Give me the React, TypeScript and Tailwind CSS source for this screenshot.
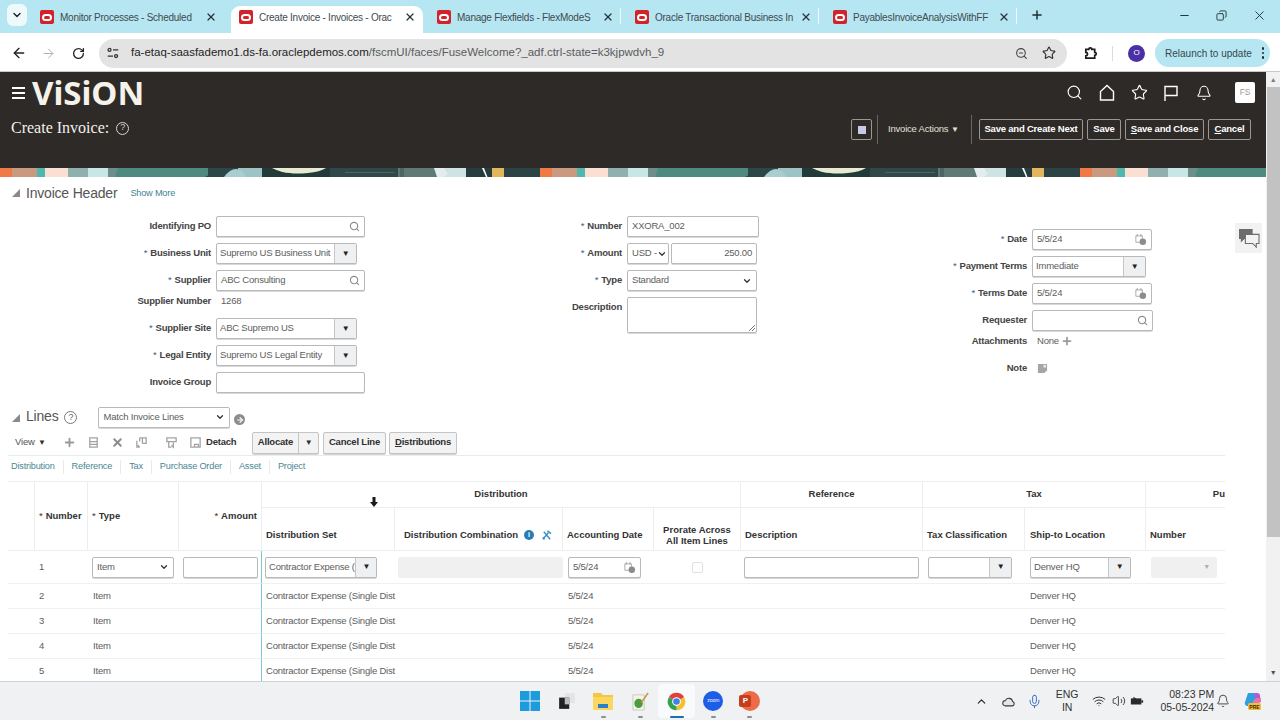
import type { ReactNode } from 'react';
import {
  ArrowLeft,
  ArrowRight,
  Bell,
  ChevronDown,
  ChevronUp,
  Copy,
  Mic,
  Minus,
  Plus,
  RotateCw,
  Search,
  Star,
  Volume2,
  Wifi,
  X,
  ZoomOut,
} from 'lucide-react';

const tabs = [
  { title: 'Monitor Processes - Scheduled', box: 'w-[199px]', sep: false },
  { title: 'Create Invoice - Invoices - Orac', box: 'mr-[6px] w-[192px] rounded-t-[9px] bg-white', sep: false },
  { title: 'Manage Flexfields - FlexModeS', box: 'w-[198px]', sep: true },
  { title: 'Oracle Transactional Business In', box: 'w-[198px]', sep: true },
  { title: 'PayablesInvoiceAnalysisWithFF', box: 'w-[198px]', sep: true },
];

// banner art repeats every 540px
const bannerBits = [
  { x: 0, w: 12, c: '#ef7a45' },
  { x: 12, w: 25, c: '#c99a80' },
  { x: 37, w: 8, c: '#4fb8ae' },
  { x: 45, w: 23, c: '#fbdfd2' },
  { x: 68, w: 20, c: '#8fb0ae' },
  { x: 88, w: 20, c: '#c7e6e6' },
  { x: 108, w: 100, c: '#4f8a80' },
  { x: 208, w: 30, c: '#2c4747' },
  { x: 238, w: 24, c: '#9cc4c6' },
  { x: 262, w: 68, c: '#223a3a' },
  { x: 330, w: 68, c: '#31484a' },
  { x: 398, w: 42, c: '#5f7a74' },
  { x: 440, w: 26, c: '#cfe2e4' },
  { x: 466, w: 26, c: '#263c3e' },
  { x: 492, w: 12, c: '#e2b75c' },
  { x: 504, w: 36, c: '#2c4345' },
];

function OracleTabIcon() {
  return (
    <span className="flex h-[14px] w-[14px] shrink-0 items-center justify-center rounded-[2px] bg-[#d3232a]">
      <span className="h-[7px] w-[10px] rounded-full border-2 border-white" />
    </span>
  );
}

function Tab({ title, box, sep }: { title: string; box: string; sep: boolean }) {
  return (
    <div className={`relative flex h-[27px] items-center self-end pb-[5px] pl-[8px] ${box}`}>
      <OracleTabIcon />
      <span className="ml-[6px] w-[138px] whitespace-nowrap text-[10px] tracking-[-0.25px] text-[#3f4a50]">
        {title}
      </span>
      <X size={12} strokeWidth={2.5} className="ml-[7px] text-[#26343b]" />
      {sep && <span className="absolute right-[6px] top-[2px] h-[16px] w-px bg-[#eef9fb]" />}
    </div>
  );
}

function ChromeBar() {
  return (
    <div className="flex h-[33px] items-center bg-[#b6e6f1]">
      <div className="mb-[3px] ml-[7px] mr-[5px] flex h-[22px] w-[20px] items-center justify-center rounded-[6px] bg-[#eef9fb]">
        <ChevronDown size={12} strokeWidth={3} className="text-[#1f2b30]" />
      </div>
      <div className="flex h-full">
        {tabs.map((t) => (
          <Tab key={t.title} {...t} />
        ))}
      </div>
      <Plus size={14} strokeWidth={2.5} className="mb-[3px] ml-[7px] text-[#1f2b30]" />
      <Minus size={13} className="mb-[3px] ml-[134px] text-[#26343b]" />
      <Copy size={11} className="mb-[3px] ml-[25px] -scale-x-100 text-[#26343b]" />
      <X size={15} strokeWidth={1.5} className="mb-[3px] ml-[25px] text-[#26343b]" />
    </div>
  );
}

function AddressBar() {
  return (
    <div className="flex h-[39px] items-center border-b border-[#c9c9c9] bg-white pt-[2px]">
      <ArrowLeft size={16} strokeWidth={2} className="ml-[11px] text-[#222]" />
      <ArrowRight size={15} strokeWidth={1.5} className="ml-[14px] text-[#a9adb0]" />
      <RotateCw size={13} strokeWidth={2.4} className="ml-[16px] text-[#222]" />
      <div className="ml-[14px] flex h-[29px] w-[968px] items-center rounded-full bg-[#e3e3e3]">
        <svg viewBox="0 0 16 16" className="ml-[7px] h-[14px] w-[14px] text-[#333]" fill="none" stroke="currentColor" strokeWidth="1.5">
          <circle cx="4" cy="4.5" r="1.7" />
          <path d="M8 4.5h6M2 11.5h6" />
          <circle cx="11.5" cy="11.5" r="1.7" />
        </svg>
        <span className="ml-[11px] whitespace-nowrap text-[11.5px] tracking-normal text-[#585c60]">
          <span className="text-[#1f2326]">fa-etaq-saasfademo1.ds-fa.oraclepdemos.com</span>/fscmUI/faces/FuseWelcome?_adf.ctrl-state=k3kjpwdvh_9
        </span>
        <ZoomOut size={13} className="ml-auto text-[#444]" />
        <Star size={14} className="ml-[14px] mr-[11px] text-[#333]" />
      </div>
      <svg viewBox="0 0 16 16" className="ml-[16px] h-[15px] w-[15px]" fill="none" stroke="#1c1c1c" strokeWidth="1.8">
        <path d="M3 3.5h3.2a1.6 1.6 0 0 1 3.2 0h3.1v3.2a1.6 1.6 0 0 1 0 3.2v3.1H3v-2.6a1.7 1.7 0 0 0 0-3.6z" />
      </svg>
      <span className="ml-[14px] h-[15px] w-px bg-[#d5dde0]" />
      <span className="ml-[15px] flex h-[17px] w-[17px] items-center justify-center rounded-full bg-[#4a2fa5] text-[8px] text-white">O</span>
      <div className="ml-[10px] flex h-[28px] w-[115px] items-center rounded-full bg-[#b6e6f1] pl-[10px] text-[10px] tracking-normal text-[#36474d]">
        Relaunch to update
        <span className="ml-[10px] flex flex-col gap-[2px]">
          <i className="h-[2.5px] w-[2.5px] rounded-full bg-[#1f2b30]" />
          <i className="h-[2.5px] w-[2.5px] rounded-full bg-[#1f2b30]" />
          <i className="h-[2.5px] w-[2.5px] rounded-full bg-[#1f2b30]" />
        </span>
      </div>
    </div>
  );
}

function HeaderBtn({ children, w }: { children: ReactNode; w: string }) {
  return (
    <span className={`flex h-[21px] ${w} items-center justify-center rounded-[2px] border border-[#9a9793] text-[9.5px] font-bold text-white`}>
      {children}
    </span>
  );
}

function Header() {
  return (
    <div className="h-[96px] bg-[#2e2a27] text-white">
      <div className="flex h-[41px] items-center pr-[11px]">
        <div className="ml-[12px] flex flex-col gap-[3px]">
          <i className="h-[2px] w-[13px] bg-white" />
          <i className="h-[2px] w-[13px] bg-white" />
          <i className="h-[2px] w-[13px] bg-white" />
        </div>
        <span className="ml-[7px] font-['Noto_Sans',sans-serif] text-[33px] font-bold leading-none tracking-normal text-[#f5f2ea]">ViSiON</span>
        <Search size={17} strokeWidth={1.6} className="ml-auto" />
        <svg viewBox="0 0 18 18" className="ml-[15px] h-[18px] w-[18px]" fill="none" stroke="white" strokeWidth="1.4">
          <path d="M2.5 16V7.5L9 1.5l6.5 6V16z" />
        </svg>
        <Star size={17} strokeWidth={1.6} className="ml-[15px]" />
        <svg viewBox="0 0 18 18" className="ml-[14px] h-[18px] w-[18px]" fill="none" stroke="white" strokeWidth="1.4">
          <path d="M3 17V2.5h12v9H3" />
        </svg>
        <Bell size={16} strokeWidth={1.6} className="ml-[16px]" />
        <span className="ml-[23px] flex h-[21px] w-[20px] items-center justify-center rounded-[2px] bg-white text-[8.5px] text-[#9a9a9a]">FS</span>
      </div>
      <div className="flex items-center pr-[15px] pt-[2px]">
        <span className="-mt-[3px] ml-[11px] font-['Liberation_Serif',serif] text-[16px] tracking-normal text-[#f3f1ec]">Create Invoice:</span>
        <span className="-mt-[3px] ml-[7px] flex h-[13px] w-[13px] items-center justify-center rounded-full border border-[#d8d6d2] text-[9px] text-[#d8d6d2]">?</span>
        <span className="ml-auto flex h-[21px] w-[21px] items-center justify-center rounded-[2px] border border-[#9a9793]">
          <i className="h-[8px] w-[8px] bg-[#c5cbe6]" />
        </span>
        <span className="ml-[5px] h-[29px] w-px bg-[#6a6763]" />
        <span className="ml-[10px] w-[59px] whitespace-nowrap text-[9.5px] text-[#e2e0dc]">Invoice Actions</span>
        <span className="ml-[4px] w-[8px] text-[8px] text-[#e2e0dc]">▼</span>
        <span className="ml-[12px] h-[29px] w-px bg-[#6a6763]" />
        <span className="ml-[7px] flex gap-[4px]">
          <HeaderBtn w="w-[104px]">Save and Create Next</HeaderBtn>
          <HeaderBtn w="w-[34px]">Save</HeaderBtn>
          <HeaderBtn w="w-[79px]">
            <span><u>S</u>ave and Close</span>
          </HeaderBtn>
          <HeaderBtn w="w-[43px]">
            <span><u>C</u>ancel</span>
          </HeaderBtn>
        </span>
      </div>
    </div>
  );
}

function Banner() {
  const repeats = [0, 540, 1080];
  return (
    <svg viewBox="0 0 1266 9" preserveAspectRatio="none" className="block h-[9px] w-full shrink-0">
      {repeats.map((o) => (
        <g key={o} transform={`translate(${o} 0)`}>
          {bannerBits.map((b) => (
            <rect key={b.x} x={b.x} y="0" width={b.w} height="9" fill={b.c} />
          ))}
          <path d="M108 0h10l-3 9h-7z" fill="#6d8f8c" />
          <path d="M205 9L222 0h16v9z" fill="#2c4747" />
          <path d="M224 9q6-8 12-8t10 8z" fill="#a9cdd0" />
          <path d="M272 0h54q-6 4-18 5t-18 0q-8 0-18-5z" fill="#e6ebd2" />
          <path d="M400 0h4v9h-4zM345 4h50v1h-50z" fill="#4d6664" />
          <path d="M482 0l4 9h1.5L484 0z" fill="#ffffff" />
          <path d="M434 0h10l4 6-5 3h-6z" fill="#e3edef" />
        </g>
      ))}
    </svg>
  );
}

function Label({ children, req, w }: { children: ReactNode; req?: boolean; w: string }) {
  return (
    <span className={`${w} shrink-0 whitespace-nowrap text-right text-[9.5px] font-bold text-[#444]`}>
      {req && <span className="mr-[3px] font-normal text-[#35648c]">*</span>}
      {children}
    </span>
  );
}

function Row({ label, req, w, children, h = 'h-[27px]' }: { label: string; req?: boolean; w: string; children: ReactNode; h?: string }) {
  return (
    <div className={`flex ${h} items-center gap-[5px]`}>
      <Label req={req} w={w}>{label}</Label>
      {children}
    </div>
  );
}

function Box({ w, children, className = '' }: { w: string; children?: ReactNode; className?: string }) {
  return (
    <div className={`flex h-[21px] ${w} items-center rounded-[2px] border border-[#b9b9b9] bg-white px-[4px] text-[9.5px] text-[#5d5d5d] shadow-[0_1px_0_#d8d8d8] ${className}`}>
      {children}
    </div>
  );
}

function SearchIco() {
  return <Search size={11} strokeWidth={2.4} className="ml-auto text-[#8b8b8b]" />;
}

function Calendar() {
  return (
    <svg viewBox="0 0 14 14" className="ml-auto h-[13px] w-[13px] shrink-0" fill="none">
      <path d="M2 3h7v7H2z" stroke="#a8a8a8" />
      <path d="M3.5 1v3M7.5 1v3" stroke="#a8a8a8" />
      <circle cx="9.5" cy="9.5" r="3.5" fill="#8c8c8c" />
    </svg>
  );
}

function Combo({ w, text, className = '' }: { w: string; text?: string; className?: string }) {
  return (
    <div className={`flex h-[21px] ${w} items-stretch overflow-hidden rounded-[2px] border border-[#b9b9b9] bg-white text-[9.5px] text-[#5d5d5d] shadow-[0_1px_0_#d8d8d8] ${className}`}>
      <span className="flex-1 self-center whitespace-nowrap pl-[3px]">{text}</span>
      <span className="flex w-[22px] shrink-0 items-center justify-center border-l border-[#c6c6c6] bg-[#eef0f1] text-[8px] text-[#222]">▼</span>
    </div>
  );
}

function Select({ w, text }: { w: string; text: string }) {
  return (
    <Box w={w}>
      <span className="whitespace-nowrap">{text}</span>
      <ChevronDown size={10} strokeWidth={3} className="ml-auto shrink-0 text-[#333]" />
    </Box>
  );
}

function HeaderForm() {
  return (
    <div className="flex h-[192px]">
      <div className="w-[370px]">
        <Row label="Identifying PO" w="w-[211px]">
          <Box w="w-[149px]"><SearchIco /></Box>
        </Row>
        <Row label="Business Unit" req w="w-[211px]">
          <Combo w="w-[141px]" text="Supremo US Business Unit" />
        </Row>
        <Row label="Supplier" req w="w-[211px]">
          <Box w="w-[149px]">ABC Consulting<SearchIco /></Box>
        </Row>
        <Row label="Supplier Number" w="w-[211px]" h="h-[21px] pb-[6px]">
          <span className="pl-[5px] text-[9.5px] text-[#5d5d5d]">1268</span>
        </Row>
        <Row label="Supplier Site" req w="w-[211px]">
          <Combo w="w-[141px]" text="ABC Supremo US" />
        </Row>
        <Row label="Legal Entity" req w="w-[211px]">
          <Combo w="w-[141px]" text="Supremo US Legal Entity" />
        </Row>
        <Row label="Invoice Group" w="w-[211px]">
          <Box w="w-[149px]" />
        </Row>
      </div>
      <div className="w-[390px]">
        <Row label="Number" req w="w-[252px]">
          <Box w="w-[132px]">XXORA_002</Box>
        </Row>
        <Row label="Amount" req w="w-[252px]">
          <div className="flex gap-[2px]">
            <Select w="w-[42px]" text="USD -" />
            <Box w="w-[86px]"><span className="ml-auto">250.00</span></Box>
          </div>
        </Row>
        <Row label="Type" req w="w-[252px]">
          <Select w="w-[130px]" text="Standard" />
        </Row>
        <div className="flex items-start gap-[5px] pt-[3px]">
          <Label w="w-[252px] pt-[3px]">Description</Label>
          <div className="relative h-[36px] w-[130px] rounded-[2px] border border-[#b9b9b9] shadow-[0_1px_0_#d8d8d8]">
            <svg viewBox="0 0 6 6" className="absolute bottom-[1px] right-[1px] h-[6px] w-[6px]" stroke="#555" strokeWidth="0.8">
              <path d="M0 6L6 0M3 6L6 3" />
            </svg>
          </div>
        </div>
      </div>
      <div className="pt-[13px]">
        <Row label="Date" req w="w-[267px]">
          <Box w="w-[120px]">5/5/24<Calendar /></Box>
        </Row>
        <Row label="Payment Terms" req w="w-[267px]">
          <Combo w="w-[114px]" text="Immediate" />
        </Row>
        <Row label="Terms Date" req w="w-[267px]">
          <Box w="w-[120px]">5/5/24<Calendar /></Box>
        </Row>
        <Row label="Requester" w="w-[267px]">
          <Box w="w-[121px]"><SearchIco /></Box>
        </Row>
        <Row label="Attachments" w="w-[267px]" h="h-[14px]">
          <span className="pl-[5px] text-[9.5px] text-[#5d5d5d]">None</span>
          <Plus size={12} strokeWidth={3.5} className="-ml-[3px] text-[#9a9a9a]" />
        </Row>
        <div className="mt-[7px]">
          <Row label="Note" w="w-[267px]">
            <svg viewBox="0 0 12 12" className="ml-[5px] h-[11px] w-[11px]">
              <path d="M1 1h10v7l-3 3H1z" fill="#a5a5a5" />
              <path d="M7 2h3v3H7z" fill="#e5e5e5" />
            </svg>
          </Row>
        </div>
      </div>
    </div>
  );
}

function Triangle() {
  return <i className="ml-[12px] block h-0 w-0 border-b-[8px] border-l-[8px] border-b-[#8a8a8a] border-l-transparent" />;
}

function ToolIcon({ d, ml }: { d: string; ml: string }) {
  return (
    <svg viewBox="0 0 14 14" className={`h-[13px] w-[13px] ${ml}`} fill="none" stroke="#a2a2a2" strokeWidth="1.4">
      <path d={d} />
    </svg>
  );
}

function GrayBtn({ children, w, ml }: { children: ReactNode; w: string; ml: string }) {
  return (
    <span className={`flex h-[22px] ${w} ${ml} items-center justify-center rounded-[2px] border border-[#c4c4c4] bg-[#f3f3f3] text-[9.5px] font-bold text-[#2f2f2f] shadow-[0_1px_0_#d6d6d6]`}>
      {children}
    </span>
  );
}

function LinesHeader() {
  return (
    <>
      <div className="flex h-[25px] items-center">
        <Triangle />
        <span className="ml-[6px] -mt-[2px] text-[14px] text-[#555]">Lines</span>
        <span className="ml-[6px] flex h-[13px] w-[13px] items-center justify-center rounded-full border border-[#777] text-[9px] text-[#666]">?</span>
        <div className="ml-[21px] -mt-[1px]">
          <Select w="w-[132px]" text="Match Invoice Lines" />
        </div>
        <span className="ml-[4px] mt-[4px] flex h-[11px] w-[11px] items-center justify-center rounded-full bg-[#8d8d8d]">
          <ArrowRight size={8} strokeWidth={3.5} className="text-white" />
        </span>
      </div>
      <div className="ml-[8px] flex h-[26px] w-[1217px] items-center border-b border-[#e7ecee]">
        <span className="ml-[7px] w-[19px] text-[9.5px] text-[#555]">View</span>
        <span className="ml-[4px] w-[8px] text-[8px] text-[#333]">▼</span>
        <Plus size={13} strokeWidth={3.5} className="ml-[17px] text-[#9a9a9a]" />
        <ToolIcon ml="ml-[11px]" d="M3 2h8v10H3zM3 6h8M3 9h8" />
        <X size={13} strokeWidth={3.5} className="ml-[11px] text-[#8a8a8a]" />
        <ToolIcon ml="ml-[11px]" d="M5 2h7v6H8M5 2v4M8 2v6M2 5v7h3M3 10l2 2" />
        <ToolIcon ml="ml-[17px]" d="M2 2h10v4H2zM4 6v6h3M9 7v5l-2-2" />
        <ToolIcon ml="ml-[11px]" d="M2 2h10v10H2zM6 9h4v3H6z" />
        <span className="ml-[4px] w-[30px] text-[9.5px] font-bold text-[#333]">Detach</span>
        <span className="ml-[16px] flex h-[22px] w-[67px] overflow-hidden rounded-[2px] border border-[#c4c4c4] bg-[#f3f3f3] text-[9.5px] font-bold text-[#2f2f2f] shadow-[0_1px_0_#d6d6d6]">
          <span className="flex flex-1 items-center justify-center">Allocate</span>
          <span className="flex w-[20px] items-center justify-center border-l border-[#c4c4c4] text-[8px]">▼</span>
        </span>
        <GrayBtn ml="ml-[4px]" w="w-[63px]">Cancel Line</GrayBtn>
        <GrayBtn ml="ml-[3px]" w="w-[68px]"><span><u>D</u>istributions</span></GrayBtn>
      </div>
      <div className="ml-[3px] flex h-[25px] items-center pb-[3px] text-[9.2px] text-[#4b8794]">
        {['Distribution', 'Reference', 'Tax', 'Purchase Order', 'Asset', 'Project'].map((t, i) => (
          <span key={t} className={i === 5 ? 'px-[8px]' : 'border-r border-[#eaeaea] px-[8px]'}>
            {t}
          </span>
        ))}
      </div>
    </>
  );
}

function Th({ children, className = '' }: { children?: ReactNode; className?: string }) {
  return <div className={`flex items-center whitespace-nowrap border-r border-[#eeeeee] text-[9.5px] font-bold tracking-normal text-[#333] ${className}`}>{children}</div>;
}

function Td({ children, className = '' }: { children?: ReactNode; className?: string }) {
  return <div className={`flex items-center whitespace-nowrap border-b border-[#f0f0f0] text-[9.5px] text-[#5d5d5d] ${className}`}>{children}</div>;
}

function LinesTable() {
  return (
    <div className="ml-[8px] grid w-[1217px] grid-cols-[27px_53px_91px_83px_133px_168px_91px_87px_182px_102px_121px_79px] grid-rows-[26px_43px_33px_25px_25px_25px_25px] overflow-hidden border-t border-[#eeeeee]">
      <Th className="row-span-2 border-b" />
      <Th className="row-span-2 border-b pl-[4px]"><span className="mr-[3px] font-normal">*</span>Number</Th>
      <Th className="row-span-2 border-b pl-[4px]"><span className="mr-[3px] font-normal">*</span>Type</Th>
      <Th className="row-span-2 justify-end border-b pr-[4px]"><span className="mr-[3px] font-normal">*</span>Amount</Th>
      <Th className="col-span-4 justify-center border-b">Distribution</Th>
      <Th className="justify-center border-b">Reference</Th>
      <Th className="col-span-2 justify-center border-b">Tax</Th>
      <div className="flex items-center justify-end border-b border-[#eeeeee] text-[9.5px] font-bold tracking-normal text-[#333]">Pu</div>

      <Th className="border-b pl-[4px] pt-[12px]">Distribution Set</Th>
      <Th className="border-b pl-[9px] pt-[12px]">
        Distribution Combination
        <span className="ml-[6px] flex h-[10px] w-[10px] items-center justify-center rounded-full bg-[#2b7db5] text-[7px] text-white">i</span>
        <svg viewBox="0 0 12 12" className="ml-[7px] h-[11px] w-[11px]" fill="none" stroke="#3b93c4" strokeWidth="1.6">
          <path d="M2 10L8 3M4 10L2 8M3 2l7 8M7 1l4 3" />
        </svg>
      </Th>
      <Th className="border-b pl-[4px] pt-[12px]">Accounting Date</Th>
      <Th className="justify-center whitespace-normal border-b pt-[12px] text-center leading-[11px]">Prorate Across<br />All Item Lines</Th>
      <Th className="border-b pl-[4px] pt-[12px]">Description</Th>
      <Th className="border-b pl-[4px] pt-[12px]">Tax Classification</Th>
      <Th className="border-b pl-[5px] pt-[12px]">Ship-to Location</Th>
      <div className="flex items-center border-b border-[#eeeeee] pl-[4px] pt-[12px] text-[9.5px] font-bold tracking-normal text-[#333]">Number</div>

      <Td />
      <Td className="pl-[4px]">1</Td>
      <Td className="pl-[4px]"><Select w="w-[82px]" text="Item" /></Td>
      <Td className="pl-[4px] [border-right:1px_solid_#7cc8d0]"><Box w="w-[75px]" className="border-[#a8a8a8]" /></Td>
      <Td className="pl-[3px]"><Combo w="w-[112px]" text="Contractor Expense (" /></Td>
      <Td className="pl-[3px]"><span className="h-[21px] w-[166px] rounded-[2px] bg-[#f0f0f0]" /></Td>
      <Td className="pl-[5px]"><Box w="w-[73px]">5/5/24<Calendar /></Box></Td>
      <Td className="justify-center"><span className="h-[11px] w-[11px] rounded-[2px] border border-[#e0e0e0]" /></Td>
      <Td className="pl-[3px]"><Box w="w-[175px]" /></Td>
      <Td className="pl-[5px]"><Combo w="w-[84px]" /></Td>
      <Td className="pl-[5px]"><Combo w="w-[101px]" text="Denver HQ" /></Td>
      <Td className="pl-[5px]">
        <span className="flex h-[21px] w-[66px] items-center justify-end rounded-[2px] bg-[#f0f0f0] pr-[7px] text-[7px] text-[#aab0b3]">▼</span>
      </Td>

      {[2, 3, 4, 5].map((n) => (
        <div key={n} className="contents">
          <Td />
          <Td className="pl-[4px]">{n}</Td>
          <Td className="pl-[5px]">Item</Td>
          <Td className="[border-right:1px_solid_#7cc8d0]" />
          <Td className="pl-[4px]">Contractor Expense (Single Dist</Td>
          <Td />
          <Td className="pl-[5px]">5/5/24</Td>
          <Td />
          <Td />
          <Td />
          <Td className="pl-[5px]">Denver HQ</Td>
          <Td />
        </div>
      ))}
    </div>
  );
}

function Content() {
  return (
    <div className="relative flex-1 overflow-hidden bg-white">
      <div className="flex h-[36px] items-center pb-[4px]">
        <Triangle />
        <span className="ml-[6px] text-[14px] text-[#555]">Invoice Header</span>
        <span className="ml-[13px] mt-[2px] text-[9.2px] text-[#3f8290]">Show More</span>
      </div>
      <HeaderForm />
      <LinesHeader />
      <LinesTable />
      {/* floating comment tab and mouse pointer */}
      <div className="absolute left-[1235px] top-[46px] flex h-[30px] w-[27px] items-center justify-center bg-[#f2f2f2]">
        <svg viewBox="0 0 24 22" className="h-[20px] w-[24px]">
          <path d="M1 1h15v11H7l-4 4v-4H1z" fill="#6c6c6c" />
          <path d="M8 7h15v10h-3v4l-4-4H8z" fill="#f2f2f2" stroke="#6c6c6c" strokeWidth="1.2" />
        </svg>
      </div>
      <svg viewBox="0 0 8 10" className="absolute left-[370px] top-[320px] h-[10px] w-[8px]">
        <path d="M2.5 0h3v5H8L4 10 0 5h2.5z" fill="#1a1a1a" />
      </svg>
    </div>
  );
}

function Scrollbar() {
  return (
    <div className="flex w-[14px] shrink-0 flex-col items-center bg-[#f1f1f1]">
      <span className="mt-[3px] h-[12px] text-[7px] text-[#7d7d7d]">▲</span>
      <span className="h-[450px] w-[13px] bg-[#c2c2c2]" />
      <span className="mb-[3px] mt-auto text-[7px] text-[#505050]">▼</span>
    </div>
  );
}

function ChromeLogo() {
  return (
    <svg viewBox="0 0 24 24" className="h-[21px] w-[21px]">
      <path d="M12 12L3.3 7A10 10 0 0 1 20.7 7z" fill="#e0413a" />
      <path d="M12 12L20.7 7A10 10 0 0 1 12 22z" fill="#f6c02c" />
      <path d="M12 12L12 22A10 10 0 0 1 3.3 7z" fill="#35a04f" />
      <circle cx="12" cy="12" r="5" fill="white" />
      <circle cx="12" cy="12" r="3.8" fill="#3f81e8" />
    </svg>
  );
}

function TaskSlot({ children, open, active }: { children: ReactNode; open?: boolean; active?: boolean }) {
  return (
    <div className={`relative flex h-[34px] w-[36.6px] items-center justify-center rounded-[4px] ${active ? 'bg-[#f9fafb]' : ''}`}>
      {children}
      {open && <i className={`absolute bottom-[0px] h-[2px] rounded-full ${active ? 'w-[14px] bg-[#1c6fb5]' : 'w-[5px] bg-[#8c8f92]'}`} />}
    </div>
  );
}

function Taskbar() {
  return (
    <div className="flex h-[39px] shrink-0 items-center border-t border-[#cfd2d4] bg-[#eff1f3] tracking-normal">
      <div className="ml-[512px] flex">
        <TaskSlot>
          <svg viewBox="0 0 20 20" className="h-[20px] w-[20px]">
            <path d="M0 0h9.5v9.5H0zM10.5 0H20v9.5h-9.5zM0 10.5h9.5V20H0zM10.5 10.5H20V20h-9.5z" fill="#1e9bdc" />
          </svg>
        </TaskSlot>
        <TaskSlot>
          <svg viewBox="0 0 16 16" className="h-[18px] w-[18px]">
            <path d="M6 1h9v9H6z" fill="#e4e4e4" />
            <path d="M1 5h9v10H1z" fill="#222" />
            <path d="M6 5h4v6H6z" fill="#bdbdbd" />
          </svg>
        </TaskSlot>
        <TaskSlot open>
          <svg viewBox="0 0 20 18" className="h-[18px] w-[20px]">
            <path d="M0 1h8l2 2h10v15H0z" fill="#f6c544" />
            <path d="M0 5h20v13H0z" fill="#fbd75f" />
            <path d="M5 12h10v4H5z" fill="#2a7fc7" />
          </svg>
        </TaskSlot>
        <TaskSlot open>
          <svg viewBox="0 0 18 20" className="h-[19px] w-[17px]">
            <path d="M1 3h12v16H1z" fill="#f3f3ea" stroke="#b9b9b0" strokeWidth="0.7" />
            <ellipse cx="7" cy="12" rx="4.5" ry="5" fill="#4b9c3a" />
            <path d="M10 11L17 1" stroke="#c99a45" strokeWidth="1.6" />
          </svg>
        </TaskSlot>
        <TaskSlot open active><ChromeLogo /></TaskSlot>
        <TaskSlot open>
          <span className="flex h-[20px] w-[20px] items-center justify-center rounded-full bg-[#1d5ee6] text-[5px] text-white">zoom</span>
        </TaskSlot>
        <TaskSlot open>
          <span className="relative h-[20px] w-[21px]">
            <i className="absolute right-0 h-[20px] w-[20px] rounded-full bg-[#ed6c47]" />
            <span className="absolute left-0 top-[4px] flex h-[12px] w-[12px] items-center justify-center rounded-[2px] bg-[#c43e1c] text-[8px] font-bold text-white">P</span>
          </span>
        </TaskSlot>
      </div>
      <ChevronUp size={13} strokeWidth={2} className="ml-[207px] text-[#222]" />
      <svg viewBox="0 0 16 12" className="ml-[14px] h-[11px] w-[14px]" fill="#e4e6e8" stroke="#3a3a3a" strokeWidth="1.2">
        <path d="M4 11a3 3 0 0 1-.3-6 4.5 4.5 0 0 1 8.5 1A2.6 2.6 0 0 1 12 11z" />
      </svg>
      <Mic size={15} strokeWidth={1.6} className="ml-[11px] text-[#3f6fc4]" />
      <span className="ml-[15px] flex w-[20px] flex-col items-center text-[10.5px] leading-[13px] text-[#333]">
        <span>ENG</span>
        <span>IN</span>
      </span>
      <Wifi size={14} strokeWidth={1.7} className="ml-[15px] text-[#333]" />
      <Volume2 size={14} strokeWidth={1.5} className="ml-[6px] text-[#333]" />
      <svg viewBox="0 0 16 10" className="ml-[4px] h-[10px] w-[14px]">
        <path d="M1 2h12v7H1z" fill="#2a2a2a" />
        <path d="M13 4h2v3h-2zM4 0l4 3H4z" fill="#2a2a2a" />
      </svg>
      <span className="ml-[14px] flex w-[56px] flex-col items-end whitespace-nowrap text-[10.5px] leading-[13px] text-[#333]">
        <span>08:23 PM</span>
        <span>05-05-2024</span>
      </span>
      <Bell size={14} strokeWidth={1.5} className="ml-[2px] text-[#333]" />
      <svg viewBox="0 0 20 20" className="ml-[13px] h-[20px] w-[20px]">
        <path d="M5 2h6l2 5-5 8H4a3 3 0 0 1-2-4z" fill="#2f9fe0" />
        <path d="M11 2h3a3 3 0 0 1 3 3l1 6-5 1z" fill="#b25bd6" />
        <path d="M8 15l5-8h5l-2 6a3 3 0 0 1-3 2z" fill="#ef6fa6" />
        <rect x="5" y="12" width="13" height="7" rx="1.5" fill="#f0bf3f" />
        <text x="11.5" y="17.5" fontSize="5" fontWeight="700" textAnchor="middle" fill="#3a2a00">PRE</text>
      </svg>
    </div>
  );
}

export default function App() {
  return (
    <div className="flex h-[720px] w-[1280px] flex-col overflow-hidden bg-white font-['Liberation_Sans',Arial,sans-serif] tracking-[-0.2px]">
      <ChromeBar />
      <AddressBar />
      <div className="flex min-h-0 flex-1">
        <div className="flex min-w-0 flex-1 flex-col">
          <Header />
          <Banner />
          <Content />
        </div>
        <Scrollbar />
      </div>
      <Taskbar />
    </div>
  );
}
